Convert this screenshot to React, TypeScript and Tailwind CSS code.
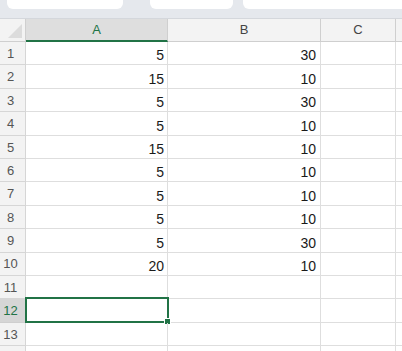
import React from 'react';

const values: [number | null, number | null][] = [
  [5, 30],
  [15, 10],
  [5, 30],
  [5, 10],
  [15, 10],
  [5, 10],
  [5, 10],
  [5, 10],
  [5, 30],
  [20, 10],
  [null, null],
  [null, null],
  [null, null],
  [null, null],
];

const SELECTED_ROW = 12;
const VISIBLE_LABELS = 13;

function App() {
  return (
    <div className="w-[402px] h-[351px] overflow-hidden bg-white font-['Liberation_Sans',Arial,sans-serif] select-none">
      {/* Tab strip */}
      <div className="h-[19px] bg-[#e5e8ed] border-b border-[#d4d7dc] flex items-start">
        <div className="ml-[7px] w-[116px] h-[9px] bg-white rounded-b-[6px]" />
        <div className="ml-[27px] w-[83px] h-[9px] bg-white rounded-b-[6px]" />
        <div className="ml-[10px] flex-1 h-[9px] bg-white rounded-bl-[6px]" />
      </div>

      {/* Column headers */}
      <div className="grid grid-cols-[26px_142px_153px_75px_1fr] h-[23px] bg-[#f3f3f3] text-[13px] text-[#444]">
        <div className="relative border-r border-b border-[#cfcfcf]">
          <div className="absolute right-[3px] bottom-[3px] w-0 h-0 border-l-[14px] border-l-transparent border-b-[14px] border-b-[#dcdcdc]" />
        </div>
        <div className="flex items-center justify-center bg-[#dedede] border-r border-[#cfcfcf] border-b-2 border-b-[#217346] text-[#217346]">
          A
        </div>
        <div className="flex items-center justify-center border-r border-b border-[#cfcfcf]">B</div>
        <div className="flex items-center justify-center border-r border-b border-[#cfcfcf]">C</div>
        <div className="border-b border-[#cfcfcf]" />
      </div>

      {/* Rows */}
      <div className="flex flex-col">
        {values.map(([a, b], i) => {
          const row = i + 1;
          const selected = row === SELECTED_ROW;
          return (
            <div key={row} className="grid grid-cols-[26px_142px_153px_75px_1fr] h-[23.4px] shrink-0">
              <div
                className={
                  selected
                    ? 'flex items-center justify-center pr-[4px] pt-[1px] text-[13px] bg-[#d6d6d6] text-[#217346] border-r border-b border-[#cfcfcf]'
                    : 'flex items-center justify-center pr-[4px] pt-[1px] text-[13px] bg-[#f3f3f3] text-[#555] border-r border-b border-[#d6d6d6]'
                }
              >
                {row <= VISIBLE_LABELS ? row : null}
              </div>
              <div className="relative flex items-end justify-end pr-[3px] text-[14px] leading-[17px] text-[#1a1a1a] border-r border-b border-[#dedede]">
                {a}
                {selected && (
                  <div className="absolute -left-[1px] -top-[2px] -right-[2px] -bottom-[1px] border-2 border-[#217346]">
                    <div className="absolute -right-[4px] -bottom-[4px] w-[7px] h-[7px] bg-[#217346] border border-white" />
                  </div>
                )}
              </div>
              <div className="flex items-end justify-end pr-[4px] text-[14px] leading-[17px] text-[#1a1a1a] border-r border-b border-[#dedede]">
                {b}
              </div>
              <div className="border-r border-b border-[#dedede]" />
              <div className="border-b border-[#dedede]" />
            </div>
          );
        })}
      </div>
    </div>
  );
}

export default App;
